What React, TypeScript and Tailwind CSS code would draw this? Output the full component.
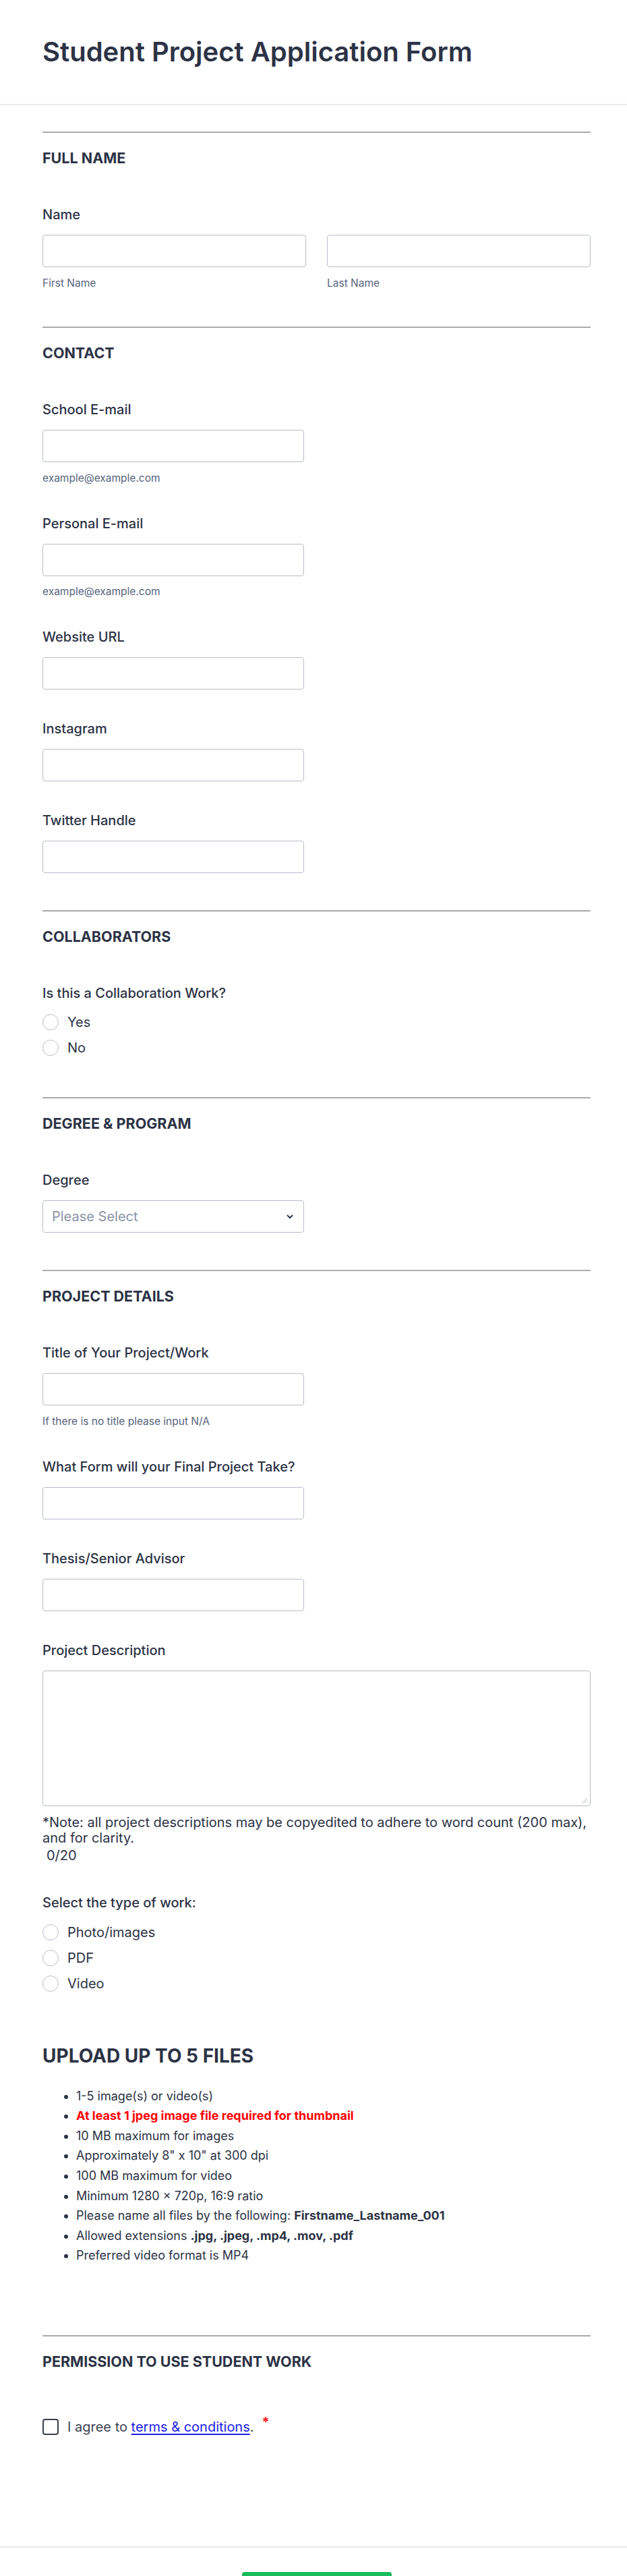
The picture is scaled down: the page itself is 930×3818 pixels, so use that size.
import React from "react";

const TEXT = "text-[#2c3345]";

function Divider({ className = "" }: { className?: string }) {
  return <div className={`h-[2px] bg-[#ababab] ${className}`} />;
}

function SectionHeader({ children }: { children: React.ReactNode }) {
  return (
    <h2 className={`mt-[23px] text-[21.5px] leading-[28px] font-bold ${TEXT}`}>
      {children}
    </h2>
  );
}

function Label({ children, className = "" }: { children: React.ReactNode; className?: string }) {
  return (
    <div className={`text-[20px] leading-[24px] font-medium ${TEXT} ${className}`}>
      {children}
    </div>
  );
}

function TextInput({ className = "w-[388px]" }: { className?: string }) {
  return (
    <div
      className={`mt-[18px] h-[48px] rounded-[4px] border border-[#b8bdc9] bg-white ${className}`}
    />
  );
}

function Sub({ children }: { children: React.ReactNode }) {
  return (
    <div className="mt-[14.5px] text-[15.5px] leading-[18px] text-[#57647e]">{children}</div>
  );
}

function Radio({ label }: { label: string }) {
  return (
    <div className="flex h-[38px] items-center gap-[13px]">
      <span className="h-[24px] w-[24px] shrink-0 rounded-full border border-[#b8bdc9] bg-white" />
      <span className={`text-[20px] leading-[24px] ${TEXT}`}>{label}</span>
    </div>
  );
}

export default function App() {
  return (
    <div className="w-[930px] bg-white font-[Inter,sans-serif] antialiased">
      {/* Header */}
      <header className="h-[156px] border-b-2 border-[#e9ebef] pt-[53px] pl-[63px]">
        <h1 className={`text-[40px] leading-[48px] font-semibold ${TEXT}`}>
          Student Project Application Form
        </h1>
      </header>

      <main className="ml-[63px] w-[813px]">
        {/* FULL NAME */}
        <Divider className="mt-[39px]" />
        <SectionHeader>FULL NAME</SectionHeader>
        <Label className="mt-[58px]">Name</Label>
        <div className="flex gap-[31px]">
          <div className="w-[391px]">
            <TextInput className="w-[391px]" />
            <Sub>First Name</Sub>
          </div>
          <div className="w-[391px]">
            <TextInput className="w-[391px]" />
            <Sub>Last Name</Sub>
          </div>
        </div>

        {/* CONTACT */}
        <Divider className="mt-[55.5px]" />
        <SectionHeader>CONTACT</SectionHeader>
        <Label className="mt-[58px]">School E-mail</Label>
        <TextInput />
        <Sub>example@example.com</Sub>
        <Label className="mt-[46px]">Personal E-mail</Label>
        <TextInput />
        <Sub>example@example.com</Sub>
        <Label className="mt-[46px]">Website URL</Label>
        <TextInput />
        <Label className="mt-[46px]">Instagram</Label>
        <TextInput />
        <Label className="mt-[46px]">Twitter Handle</Label>
        <TextInput />

        {/* COLLABORATORS */}
        <Divider className="mt-[55px]" />
        <SectionHeader>COLLABORATORS</SectionHeader>
        <Label className="mt-[58px]">Is this a Collaboration Work?</Label>
        <div className="mt-[12px]">
          <Radio label="Yes" />
          <Radio label="No" />
        </div>

        {/* DEGREE & PROGRAM */}
        <Divider className="mt-[54px]" />
        <SectionHeader>DEGREE &amp; PROGRAM</SectionHeader>
        <Label className="mt-[58px]">Degree</Label>
        <div className="mt-[18px] flex h-[48px] w-[388px] items-center justify-between rounded-[4px] border border-[#b8bdc9] bg-white pl-[13px] pr-[14px]">
          <span className="text-[20px] leading-[24px] text-[#8a93a6]">Please Select</span>
          <svg width="10" height="7" viewBox="0 0 10 7" className="mr-[1px]">
            <polyline
              points="1.5,1.5 5,5 8.5,1.5"
              fill="none"
              stroke="#2c3345"
              strokeWidth="1.8"
              strokeLinecap="round"
              strokeLinejoin="round"
            />
          </svg>
        </div>

        {/* PROJECT DETAILS */}
        <Divider className="mt-[55px]" />
        <SectionHeader>PROJECT DETAILS</SectionHeader>
        <Label className="mt-[58px]">Title of Your Project/Work</Label>
        <TextInput />
        <Sub>If there is no title please input N/A</Sub>
        <Label className="mt-[46px]">What Form will your Final Project Take?</Label>
        <TextInput />
        <Label className="mt-[46px]">Thesis/Senior Advisor</Label>
        <TextInput />
        <Label className="mt-[46px]">Project Description</Label>
        <div className="relative mt-[18px] h-[201px] w-[813px] rounded-[4px] border border-[#b8bdc9] bg-white">
          <svg
            width="9"
            height="9"
            viewBox="0 0 9 9"
            className="absolute right-[3px] bottom-[3px]"
          >
            <line x1="1" y1="8" x2="8" y2="1" stroke="#b0b4bc" strokeWidth="1" />
            <line x1="4.5" y1="8" x2="8" y2="4.5" stroke="#b0b4bc" strokeWidth="1" />
          </svg>
        </div>
        <div className={`mt-[13px] text-[20px] leading-[23px] ${TEXT}`}>
          *Note: all project descriptions may be copyedited to adhere to word count (200 max),
          and for clarity.
        </div>
        <div className={`mt-[3px] pl-[6px] text-[20px] leading-[23px] ${TEXT}`}>0/20</div>

        <Label className="mt-[46px]">Select the type of work:</Label>
        <div className="mt-[13px]">
          <Radio label="Photo/images" />
          <Radio label="PDF" />
          <Radio label="Video" />
        </div>

        {/* UPLOAD */}
        <h2 className={`mt-[71.5px] text-[28px] leading-[34px] font-bold ${TEXT}`}>
          UPLOAD UP TO 5 FILES
        </h2>
        <ul
          className={`mt-[27.7px] list-disc pl-[50px] text-[18px] leading-[29.6px] ${TEXT} marker:text-[#2c3345]`}
        >
          <li>1-5 image(s) or video(s)</li>
          <li className="font-bold text-[#ff0000]">
            At least 1 jpeg image file required for thumbnail
          </li>
          <li>10 MB maximum for images</li>
          <li>Approximately 8" x 10" at 300 dpi</li>
          <li>100 MB maximum for video</li>
          <li>Minimum 1280 × 720p, 16:9 ratio</li>
          <li>
            Please name all files by the following:{" "}
            <strong className="font-bold">Firstname_Lastname_001</strong>
          </li>
          <li>
            Allowed extensions <strong className="font-bold">.jpg, .jpeg, .mp4, .mov, .pdf</strong>
          </li>
          <li>Preferred video format is MP4</li>
        </ul>

        {/* PERMISSION */}
        <Divider className="mt-[103px]" />
        <SectionHeader>PERMISSION TO USE STUDENT WORK</SectionHeader>
        <div className="mt-[71px] flex h-[24px] items-center">
          <span className="h-[24px] w-[24px] shrink-0 rounded-[4px] border-2 border-[#3a3f4d] bg-white" />
          <span className="ml-[13px] text-[20px] leading-[24px] text-[#3d4353]">
            I agree to{" "}
            <a href="#" className="text-[#1c1ce8] underline underline-offset-[3px]">
              terms &amp; conditions
            </a>
            .
          </span>
          <span className="relative -top-[7px] ml-[12px] text-[20px] leading-[24px] font-bold text-[#ff2020]">
            *
          </span>
        </div>
      </main>

      {/* Footer */}
      <footer className="mt-[165px] border-t-2 border-[#e6e9ee] pt-[36px] pb-[40px]">
        <div className="ml-[63px] flex w-[813px] justify-center">
          <div className="h-[50px] w-[222px] rounded-[4px] bg-[#18bd5b]" />
        </div>
      </footer>
    </div>
  );
}
